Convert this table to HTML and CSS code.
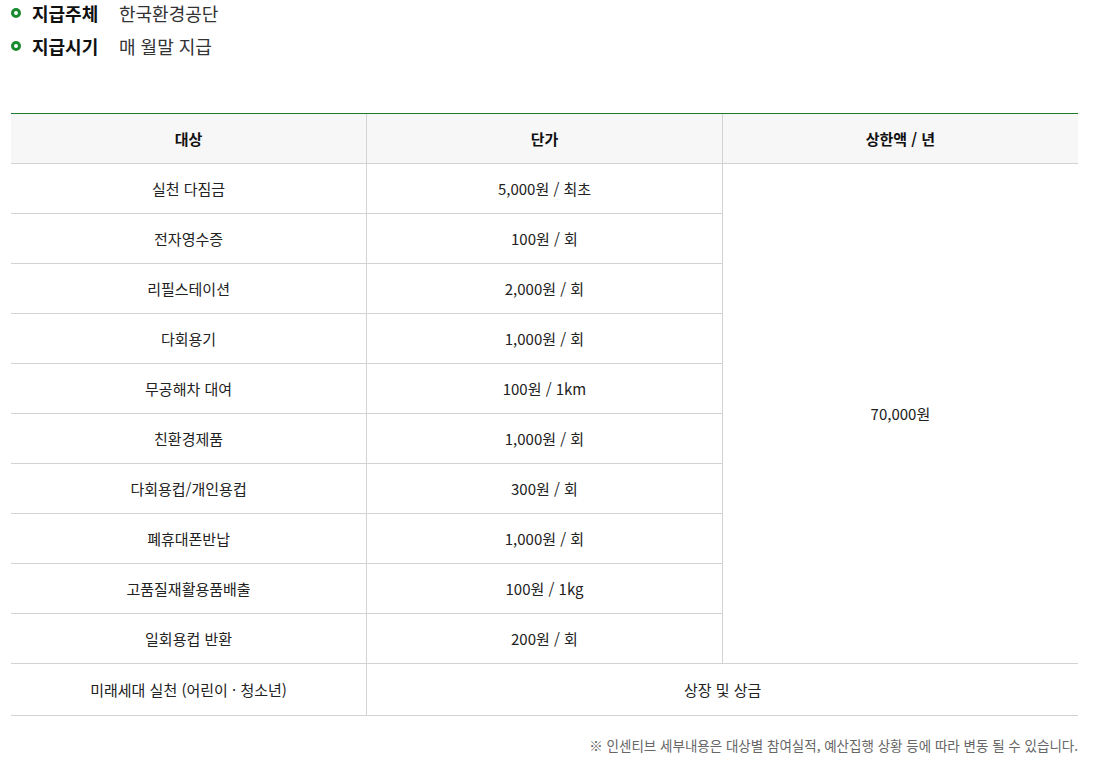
FILE: index.html
```html
<!DOCTYPE html>
<html lang="ko">
<head>
<meta charset="utf-8">
<link rel="stylesheet" href="styles.css">
</head>
<body>
<div class="wrap">
  <ul class="info">
    <li><span class="label">지급주체</span><span class="value">한국환경공단</span></li>
    <li><span class="label">지급시기</span><span class="value">매 월말 지급</span></li>
  </ul>
  <table class="tbl">
    <colgroup><col class="c1"><col class="c2"><col class="c3"></colgroup>
    <thead>
      <tr><th>대상</th><th>단가</th><th>상한액 / 년</th></tr>
    </thead>
    <tbody>
      <tr><td>실천 다짐금</td><td>5,000원 / 최초</td><td rowspan="10">70,000원</td></tr>
      <tr><td>전자영수증</td><td>100원 / 회</td></tr>
      <tr><td>리필스테이션</td><td>2,000원 / 회</td></tr>
      <tr><td>다회용기</td><td>1,000원 / 회</td></tr>
      <tr><td>무공해차 대여</td><td>100원 / 1km</td></tr>
      <tr><td>친환경제품</td><td>1,000원 / 회</td></tr>
      <tr><td>다회용컵/개인용컵</td><td>300원 / 회</td></tr>
      <tr><td>폐휴대폰반납</td><td>1,000원 / 회</td></tr>
      <tr><td>고품질재활용품배출</td><td>100원 / 1kg</td></tr>
      <tr><td>일회용컵 반환</td><td>200원 / 회</td></tr>
      <tr class="last"><td>미래세대 실천 (어린이 · 청소년)</td><td colspan="2">상장 및 상금</td></tr>
    </tbody>
  </table>
  <p class="note">※ 인센티브 세부내용은 대상별 참여실적, 예산집행 상황 등에 따라 변동 될 수 있습니다.</p>
</div>
</body>
</html>
```
FILE: styles.css
```css
*, *::before, *::after { box-sizing: border-box; }
html, body { margin: 0; padding: 0; background: #fff; }
body {
  font-family: "Noto Sans CJK KR", "Noto Sans", sans-serif;
  color: #222;
}
.wrap {
  padding: 0 17px 0 11px;
}
.info {
  list-style: none;
  margin: -4px 0 0 0;
  padding: 0;
}
.info li {
  display: flex;
  align-items: center;
  height: 33px;
  font-size: 18px;
}
.info li::before {
  content: "";
  width: 10px;
  height: 10px;
  border: 3px solid #1a8a2e;
  border-radius: 50%;
  margin-right: 11px;
  flex: none;
}
.label {
  font-weight: 700;
  color: #111;
  width: 87px;
}
.value {
  color: #333;
}
.tbl {
  width: 100%;
  margin-top: 51px;
  border-collapse: collapse;
  table-layout: fixed;
  font-size: 15px;
}
.tbl th, .tbl td {
  height: 50px;
  padding: 0;
  text-align: center;
  vertical-align: middle;
  border-bottom: 1px solid #d3d3d3;
  border-left: 1px solid #d3d3d3;
  color: #222;
  font-weight: 400;
}
.tbl th {
  background: #f7f7f7;
  font-weight: 700;
  color: #111;
  border-top: 1px solid #1e7a2a;
}
.tbl tr > :first-child { border-left: none; }
.tbl tr.last td { height: 52px; }
.note {
  margin: 19px 0 0 0;
  text-align: right;
  font-size: 13.5px;
  color: #666;
}
```
